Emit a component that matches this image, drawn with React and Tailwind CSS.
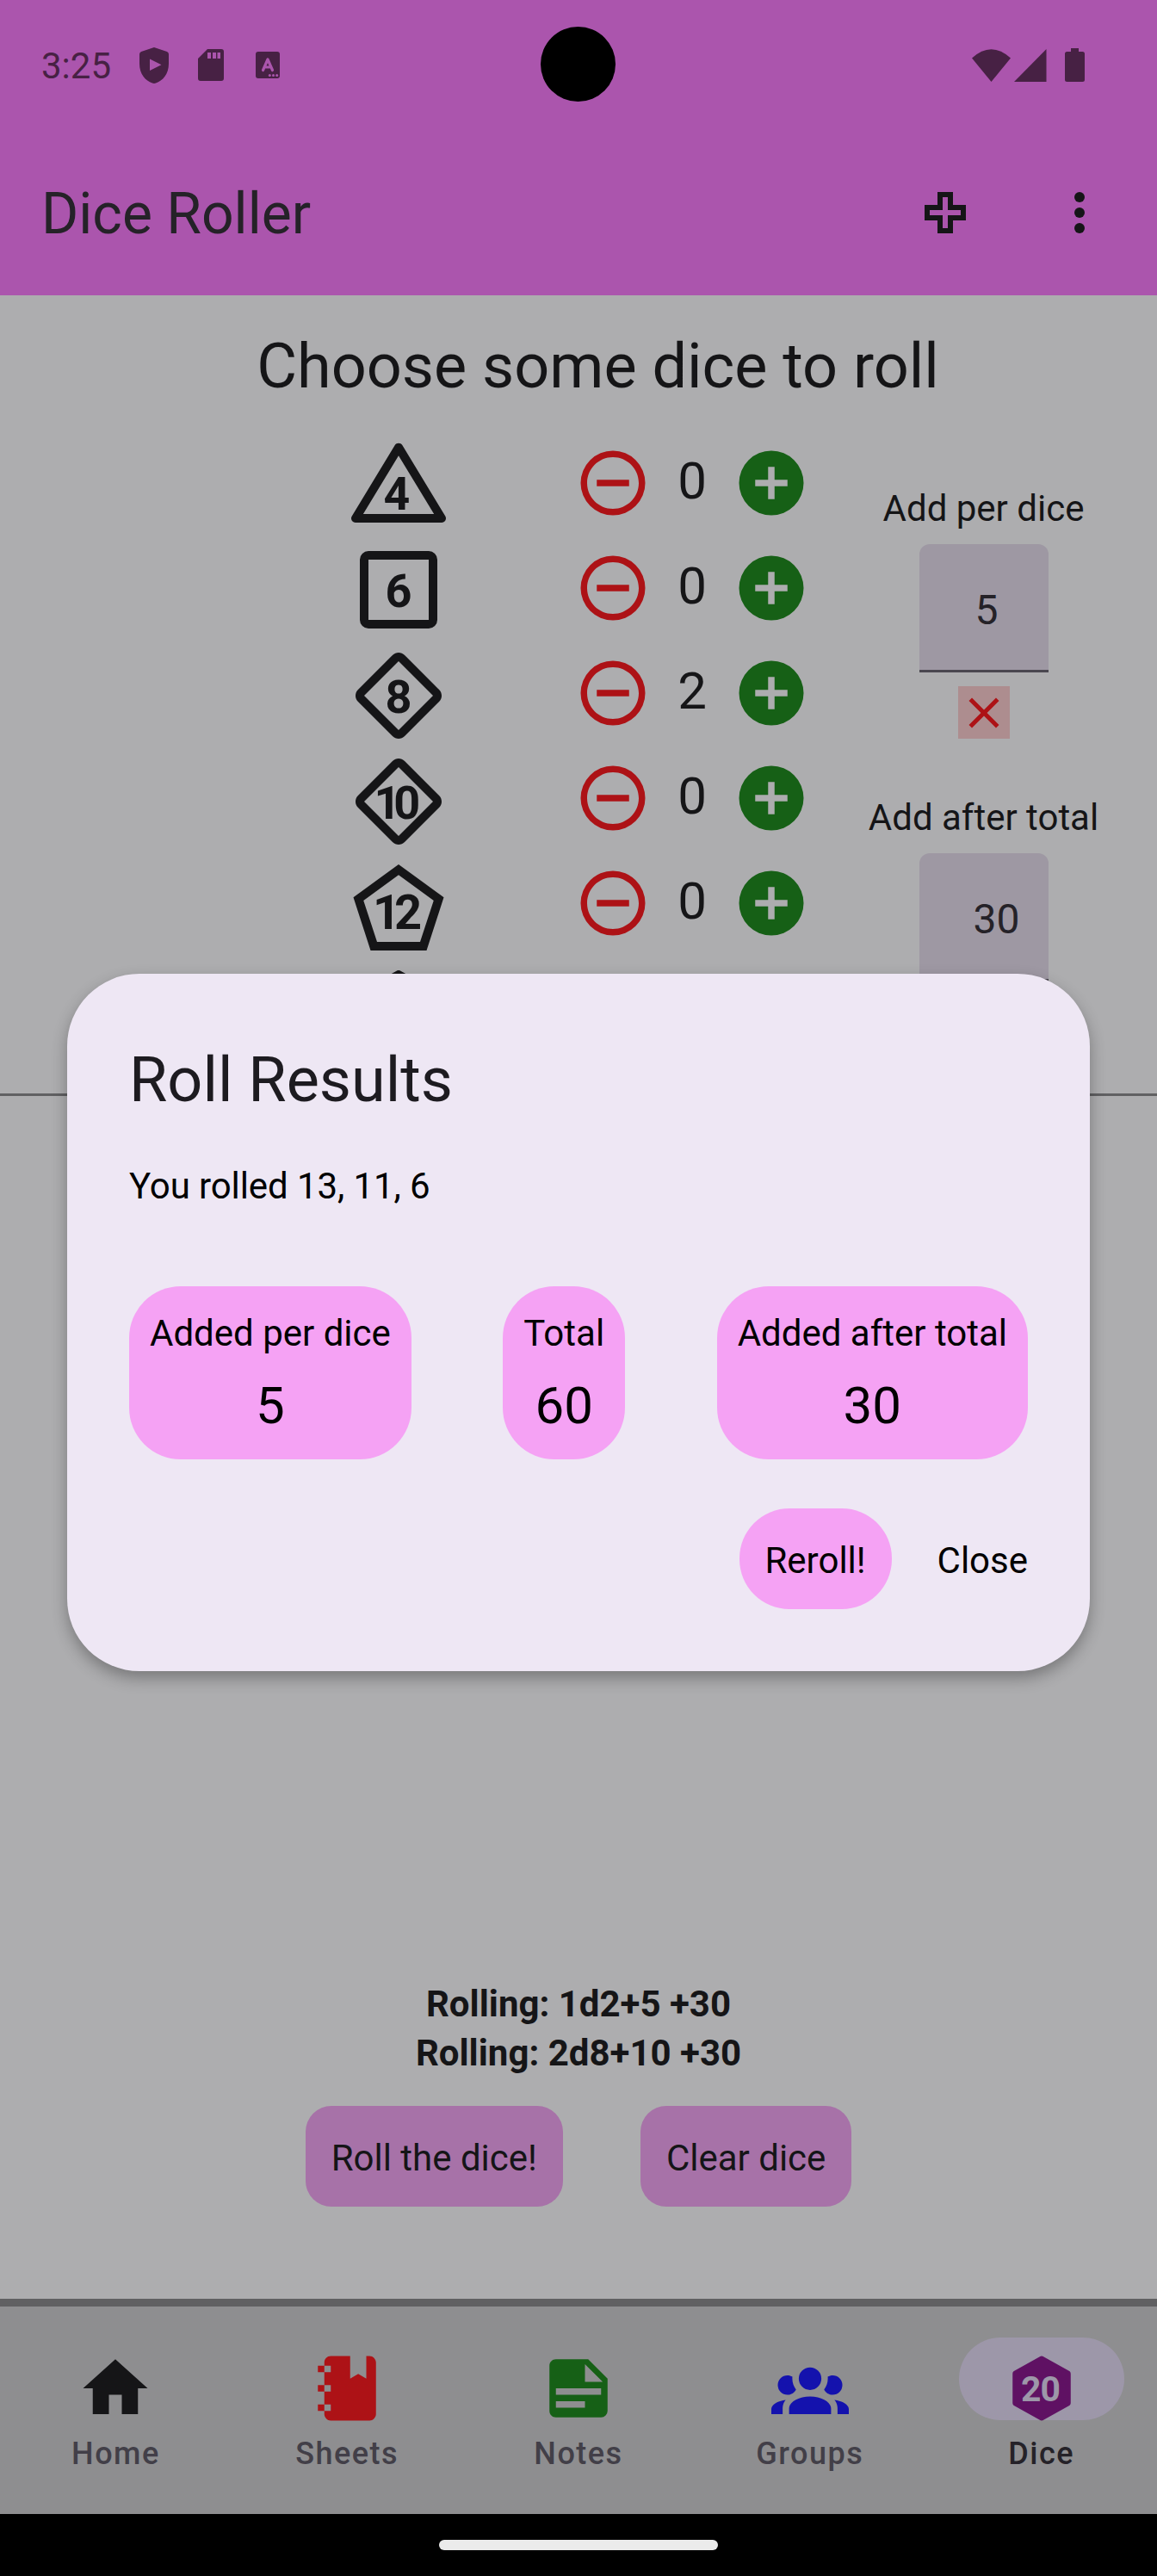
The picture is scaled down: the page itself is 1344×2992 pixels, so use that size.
import React from "react";

const PATHS = {
  d4: "M22 21H2C1.64 21 1.31 20.81 1.13 20.5C.95 20.18 .96 19.79 1.15 19.5L11.15 3C11.5 2.38 12.5 2.38 12.86 3L22.86 19.5C23.04 19.79 23.05 20.18 22.87 20.5C22.69 20.81 22.36 21 22 21M3.78 19H20.23L12 5.43L3.78 19Z",
  d6: "M5 3H19A2 2 0 0 1 21 5V19A2 2 0 0 1 19 21H5A2 2 0 0 1 3 19V5A2 2 0 0 1 5 3M5 5V19H19V5H5Z",
  diamond:
    "M12 2C11.5 2 11 2.19 10.59 2.59L2.59 10.59C1.8 11.37 1.8 12.63 2.59 13.41L10.59 21.41C11.37 22.2 12.63 22.2 13.41 21.41L21.41 13.41C22.2 12.63 22.2 11.37 21.41 10.59L13.41 2.59C13 2.19 12.5 2 12 2M12 4L20 12L12 20L4 12L12 4Z",
  d12: "M12 2L1.5 9.64L5.5 22H18.5L22.5 9.64L12 2M17 20H7L3.85 10.4L12 4.47L20.15 10.4L17 20Z",
  hexOutline:
    "M20.47 6.62L12.57 2.18C12.41 2.06 12.21 2 12 2C11.79 2 11.59 2.06 11.43 2.18L3.53 6.62C3.21 6.79 3 7.12 3 7.5V16.5C3 16.88 3.21 17.21 3.53 17.38L11.43 21.82C11.59 21.94 11.79 22 12 22C12.21 22 12.41 21.94 12.57 21.82L20.47 17.38C20.79 17.21 21 16.88 21 16.5V7.5C21 7.12 20.79 6.79 20.47 6.62M19 15.91L12 19.85L5 15.91V8.09L12 4.15L19 8.09V15.91Z",
  minus:
    "M12 20C7.59 20 4 16.41 4 12S7.59 4 12 4S20 7.59 20 12S16.41 20 12 20M12 2A10 10 0 0 0 2 12A10 10 0 0 0 12 22A10 10 0 0 0 22 12A10 10 0 0 0 12 2M7 13H17V11H7",
  plus: "M17 13H13V17H11V13H7V11H11V7H13V11H17M12 2A10 10 0 0 0 2 12A10 10 0 0 0 12 22A10 10 0 0 0 22 12A10 10 0 0 0 12 2Z",
  close:
    "M19 6.41L17.59 5L12 10.59L6.41 5L5 6.41L10.59 12L5 17.59L6.41 19L12 13.41L17.59 19L19 17.59L13.41 12L19 6.41Z",
  home: "M10 20V14H14V20H19V12H22L12 3L2 12H5V20H10Z",
  sheets:
    "M3 7V5H5V4C5 2.89 5.9 2 7 2H13V9L15.5 7.5L18 9V2H19C20.05 2 21 2.95 21 4V20C21 21.05 20.05 22 19 22H7C5.95 22 5 21.05 5 20V19H3V17H5V13H3V11H5V7H3M7 11H5V13H7V11M7 7V5H5V7H7M7 19V17H5V19H7Z",
  notes:
    "M14 10H19.5L14 4.5V10M5 3H15L21 9V19A2 2 0 0 1 19 21H5C3.89 21 3 20.1 3 19V5C3 3.89 3.89 3 5 3M5 12V14H19V12H5M5 16V18H14V16H5Z",
  groups:
    "M12 5.5A3.5 3.5 0 0 1 15.5 9A3.5 3.5 0 0 1 12 12.5A3.5 3.5 0 0 1 8.5 9A3.5 3.5 0 0 1 12 5.5M5 8C5.56 8 6.08 8.15 6.53 8.42C6.38 9.85 6.8 11.27 7.66 12.38C7.16 13.34 6.16 14 5 14A3 3 0 0 1 2 11A3 3 0 0 1 5 8M19 8A3 3 0 0 1 22 11A3 3 0 0 1 19 14C17.84 14 16.84 13.34 16.34 12.38C17.2 11.27 17.62 9.85 17.47 8.42C17.92 8.15 18.44 8 19 8M5.5 18.25C5.5 16.18 8.41 14.5 12 14.5C15.59 14.5 18.5 16.18 18.5 18.25V20H5.5V18.25M0 20V18.5C0 17.11 1.89 15.94 4.45 15.6C3.86 16.28 3.5 17.22 3.5 18.25V20H0M24 20H20.5V18.25C20.5 17.22 20.14 16.28 19.55 15.6C22.11 15.94 24 17.11 24 18.5V20Z",
  hex: "M21 16.5C21 16.88 20.79 17.21 20.47 17.38L12.57 21.82C12.41 21.94 12.21 22 12 22C11.79 22 11.59 21.94 11.43 21.82L3.53 17.38C3.21 17.21 3 16.88 3 16.5V7.5C3 7.12 3.21 6.79 3.53 6.62L11.43 2.18C11.59 2.06 11.79 2 12 2C12.21 2 12.41 2.06 12.57 2.18L20.47 6.62C20.79 6.79 21 7.12 21 7.5V16.5Z",
};

function Icon({ name, className, children }) {
  return (
    <svg viewBox="0 0 24 24" className={className} fill="currentColor">
      <path fillRule="evenodd" d={PATHS[name]} />
      {children}
    </svg>
  );
}

const DICE = [
  { shape: "d4", label: "4", x: 8.5, y: 18, size: 10.7, spacing: 0, count: 0 },
  { shape: "d6", label: "6", x: 8.9, y: 16, size: 10.8, spacing: 0, count: 0 },
  { shape: "diamond", label: "8", x: 8.9, y: 16, size: 10.8, spacing: 0, count: 2 },
  { shape: "diamond", label: "10", x: 6.3, y: 15.95, size: 10.8, spacing: -1.65, count: 0 },
  { shape: "d12", label: "12", x: 5.98, y: 17, size: 11.2, spacing: -1.4, count: 0 },
];

function StatusBar() {
  return (
    <div className="flex h-[151px] items-center justify-between pr-[84px] pl-12 text-[#472144]">
      <div className="flex items-center">
        <span className="w-[114px] pt-[2px] text-[42px] leading-[50px]">3:25</span>
        <svg viewBox="0 0 34 42" className="h-[42px] w-[34px]" fill="currentColor">
          <path
            fillRule="evenodd"
            d="M17 0L32 5Q34 6 34 8V19C34 31 27 39 19 41.500Q17 42.300 15 41.500C7 39 0 31 0 19V8Q0 6 2 5ZM12 13.500V27L25.500 20.200Z"
          />
        </svg>
        <svg viewBox="0 0 30 37" className="ml-[34px] h-[37px] w-[30px]" fill="currentColor">
          <path
            fillRule="evenodd"
            d="M11 0H27Q30 0 30 3V34Q30 37 27 37H3Q0 37 0 34V11ZM11 4V11H15V4ZM17 4V11H21V4ZM22.500 4V11H26V4Z"
          />
        </svg>
        <svg viewBox="0 0 28 31" className="ml-[37px] h-[31px] w-[28px]">
          <rect width="28" height="31" rx="3" fill="currentColor" />
          <path d="M8.500 21.500L14 9L19.500 21.500M10.500 18H17.500" fill="none" stroke="#ab55ad" strokeWidth="3.200" strokeLinecap="round" strokeLinejoin="round" />
          <g fill="#ab55ad">
            <circle cx="16.300" cy="27.500" r="1.500" />
            <circle cx="20.500" cy="27.500" r="1.500" />
            <circle cx="24.700" cy="27.500" r="1.500" />
          </g>
        </svg>
      </div>
      <div className="flex items-center">
        <svg viewBox="0 0 45 38" className="h-[38px] w-[45px]" fill="currentColor">
          <path d="M0 10.500Q22.500 -10 45 10.500L22.500 38Z" />
        </svg>
        <svg viewBox="0 0 38 38" className="ml-[4px] h-[38px] w-[38px]" fill="currentColor">
          <path d="M37.500 0V38H0Z" />
        </svg>
        <svg viewBox="0 0 23 39" className="ml-[21px] h-[39px] w-[23px]" fill="currentColor">
          <path d="M7 0H16V4H20.500Q23 4 23 6.500V36.500Q23 39 20.500 39H2.500Q0 39 0 36.500V6.500Q0 4 2.500 4H7Z" />
        </svg>
      </div>
    </div>
  );
}

function Header() {
  return (
    <header className="relative h-[343px] shrink-0 bg-[#ab55ad]">
      <div className="absolute top-[31px] left-[628px] h-[87px] w-[87px] rounded-full bg-black" />
      <StatusBar />
      <div className="flex h-48 items-center justify-between pr-[84px] pl-12">
        <h1 className="pt-[3px] text-[66px] leading-[84px] text-[#252228]">Dice Roller</h1>
        <div className="flex items-center">
          <svg viewBox="0 0 48 48" className="h-12 w-12" fill="none" stroke="#151517" strokeWidth="6">
            <path d="M18 3H30V18H45V30H30V45H18V30H3V18H18Z" />
          </svg>
          <svg viewBox="0 0 12 48" className="ml-[126px] h-12 w-3" fill="#151517">
            <circle cx="6" cy="6" r="6" />
            <circle cx="6" cy="24" r="6" />
            <circle cx="6" cy="42" r="6" />
          </svg>
        </div>
      </div>
    </header>
  );
}

function DiceIcons() {
  return (
    <div className="flex w-[120px] flex-col gap-[3px]">
      {DICE.map((d) => (
        <Icon key={d.label} name={d.shape} className="h-[120px] w-[120px] shrink-0">
          <text x={d.x} y={d.y} fontSize={d.size} fontWeight="700" letterSpacing={d.spacing}>
            {d.label}
          </text>
        </Icon>
      ))}
      <Icon name="hexOutline" className="h-[120px] w-[120px] shrink-0" />
    </div>
  );
}

function Counters() {
  return (
    <div className="ml-[144px] flex w-[274px] flex-col gap-8 pt-[14px]">
      {DICE.map((d) => (
        <div key={d.label} className="flex h-[90px] items-center">
          <Icon name="minus" className="h-[90px] w-[90px] text-[#ad1216]" />
          <span className="w-[94px] pb-[5px] text-center text-[60px] leading-[84px]">{d.count}</span>
          <Icon name="plus" className="h-[90px] w-[90px] text-[#166016]" />
        </div>
      ))}
    </div>
  );
}

function Modifiers() {
  return (
    <div className="flex flex-1 flex-col items-center pt-[59px]">
      <span className="text-[42px] leading-[60px]">Add per dice</span>
      <div className="mt-[11px] flex h-[149px] w-[150px] items-center rounded-t-xl border-b-[3px] border-[#4a4750] bg-[#9e98a3] pt-[7px] pl-[65px] text-[48px] text-[#252228]">
        5
      </div>
      <div className="mt-4 flex h-[61px] w-[60px] items-center justify-center bg-[#ad8d8f]">
        <Icon name="close" className="h-[60px] w-[60px] text-[#ad1216]" />
      </div>
      <span className="mt-[62px] text-[42px] leading-[60px]">Add after total</span>
      <div className="mt-[11px] flex h-[149px] w-[150px] items-center rounded-t-xl border-b-[3px] border-[#4a4750] bg-[#9e98a3] pt-[7px] pl-[63px] text-[48px] text-[#252228]">
        30
      </div>
    </div>
  );
}

function NavItem({ icon, label, color, active, children }) {
  return (
    <div className="flex flex-1 flex-col items-center pt-9">
      <div className={active ? "flex h-24 w-48 items-center justify-center rounded-full bg-[#9d97a9]" : "flex h-24 w-48 items-center justify-center"}>
        <div className={color}>
          <Icon name={icon} className="mt-[21px] h-[90px] w-[90px]">
            {children}
          </Icon>
        </div>
      </div>
      <span className={active ? "mt-[15px] text-[36px] leading-[48px] font-medium tracking-[1.5px] text-[#252228]" : "mt-[15px] text-[36px] leading-[48px] font-medium tracking-[1.5px] text-[#423f48]"}>
        {label}
      </span>
    </div>
  );
}

function ResultChip({ label, value }) {
  return (
    <div className="flex h-[201px] flex-col items-center rounded-[60px] bg-[#f5a2f4] px-6 pt-[23px]">
      <span className="text-[42px] leading-[63px]">{label}</span>
      <span className="mt-[11px] text-[60px] leading-[84px]">{value}</span>
    </div>
  );
}

function ResultsDialog() {
  return (
    <section className="absolute top-[1131px] left-[78px] flex h-[810px] w-[1188px] flex-col rounded-[84px] bg-[#eee7f4] px-[72px] pt-[76px] text-black shadow-[0_8px_18px_rgba(0,0,0,0.3)]">
      <h3 className="text-[72px] leading-[96px] text-[#1d1b20]">Roll Results</h3>
      <p className="mt-[45px] text-[42px] leading-[60px] tracking-[-0.1px]">You rolled 13, 11, 6</p>
      <div className="mt-[86px] flex justify-between">
        <ResultChip label="Added per dice" value="5" />
        <ResultChip label="Total" value="60" />
        <ResultChip label="Added after total" value="30" />
      </div>
      <div className="mt-[57px] flex items-center justify-end">
        <button className="h-[117px] w-[177px] rounded-[58px] bg-[#f5a2f4] pt-[4px] text-[42px]">Reroll!</button>
        <button className="ml-[53px] pt-[4px] text-[42px]">Close</button>
      </div>
    </section>
  );
}

export default function App() {
  return (
    <div className="relative flex h-[2992px] w-[1344px] flex-col overflow-hidden bg-[#adadaf] font-['Roboto',sans-serif] text-[#151517]">
      <Header />
      <main className="flex flex-1 flex-col">
        <h2 className="h-[159px] pt-[35px] pl-[45px] text-center text-[72px] leading-[96px]">Choose some dice to roll</h2>
        <div className="flex h-[771px] overflow-hidden border-b-[3px] border-[#606062] pl-[403px]">
          <DiceIcons />
          <Counters />
          <Modifiers />
        </div>
        <div className="flex flex-1 flex-col items-center justify-end pb-[107px]">
          <div className="text-center text-[42px] leading-[57px] font-bold">
            <p>Rolling: 1d2+5 +30</p>
            <p>Rolling: 2d8+10 +30</p>
          </div>
          <div className="mt-[33px] flex gap-[90px]">
            <button className="h-[117px] rounded-[30px] bg-[#a772a8] px-[30px] pt-[4px] text-[42px]">Roll the dice!</button>
            <button className="h-[117px] rounded-[30px] bg-[#a772a8] px-[30px] pt-[4px] text-[42px]">Clear dice</button>
          </div>
        </div>
      </main>
      <nav className="flex h-[250px] shrink-0 border-t-[9px] border-[#606062] bg-[#8e8e90]">
        <NavItem icon="home" label="Home" color="text-[#151517]" />
        <NavItem icon="sheets" label="Sheets" color="text-[#ad1216]" />
        <NavItem icon="notes" label="Notes" color="text-[#166016]" />
        <NavItem icon="groups" label="Groups" color="text-[#1412ad]" />
        <NavItem icon="hex" label="Dice" color="text-[#5f1163]" active>
          <text x="5.6" y="15.87" fontSize="10.9" fontWeight="700" letterSpacing="-0.24" fill="#9d97a9">
            20
          </text>
        </NavItem>
      </nav>
      <div className="flex h-[72px] shrink-0 justify-center bg-black pt-[30px]">
        <div className="h-3 w-[324px] rounded-full bg-[#ebebeb]" />
      </div>
      <ResultsDialog />
    </div>
  );
}
